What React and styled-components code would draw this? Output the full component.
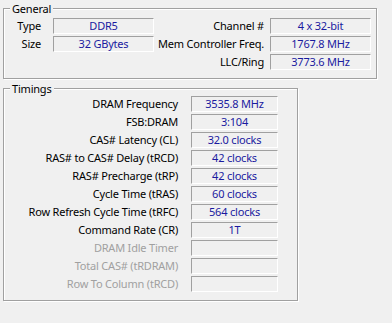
import React from "react";
import styled, { createGlobalStyle } from "styled-components";

const Global = createGlobalStyle`
  html, body {
    margin: 0;
    padding: 0;
    background: #f0f0f0;
  }
  body {
    font-family: "Noto Sans", "DejaVu Sans", sans-serif;
    font-size: 11px;
    letter-spacing: -0.2px;
    color: #000;
  }
`;

const Page = styled.div`
  width: 392px;
  height: 323px;
  padding: 8px 0 0 3px;
  box-sizing: border-box;
  display: flex;
  flex-direction: column;
  align-items: flex-start;
  gap: 9px;
`;

const Group = styled.div`
  position: relative;
  box-sizing: border-box;
  width: ${(p) => p.$width}px;
  border: 1px solid #a0a0a0;
  box-shadow: inset 1px 1px 0 #fff, 1px 1px 0 #fff;
  padding: ${(p) => p.$pad};
  display: grid;
  grid-template-columns: ${(p) => p.$cols};
  grid-auto-rows: 16px;
  row-gap: 2px;
`;

const Legend = styled.span`
  position: absolute;
  left: 6px;
  top: -8px;
  padding: 0 2px;
  line-height: 15px;
  background: #f0f0f0;
`;

const Label = styled.div`
  text-align: right;
  white-space: nowrap;
  line-height: 16px;
  padding-right: ${(p) => p.$gap}px;
  color: ${(p) => (p.$disabled ? "#a0a0a0" : "#000")};
  grid-column: ${(p) => p.$col || "auto"};
`;

const Field = styled.div`
  box-sizing: border-box;
  height: 16px;
  border-top: 1px solid #a0a0a0;
  border-left: 1px solid #a0a0a0;
  border-bottom: 1px solid #fff;
  border-right: 1px solid #fff;
  color: #1a1aa0;
  text-align: center;
  line-height: 14px;
  white-space: nowrap;
  grid-column: ${(p) => p.$col || "auto"};
`;

const timings = [
  ["DRAM Frequency", "3535.8 MHz"],
  ["FSB:DRAM", "3:104"],
  ["CAS# Latency (CL)", "32.0 clocks"],
  ["RAS# to CAS# Delay (tRCD)", "42 clocks"],
  ["RAS# Precharge (tRP)", "42 clocks"],
  ["Cycle Time (tRAS)", "60 clocks"],
  ["Row Refresh Cycle Time (tRFC)", "564 clocks"],
  ["Command Rate (CR)", "1T"],
  ["DRAM Idle Timer", null],
  ["Total CAS# (tRDRAM)", null],
  ["Row To Column (tRCD)", null],
];

export default function App() {
  return (
    <>
      <Global />
      <Page>
        <Group $width={374} $pad="9px 5px 8px 0" $cols="49px 101px 1fr 101px">
          <Legend>General</Legend>
          <Label $gap={12}>Type</Label>
          <Field>DDR5</Field>
          <Label $gap={6}>Channel #</Label>
          <Field>4 x 32-bit</Field>

          <Label $gap={12}>Size</Label>
          <Field>32 GBytes</Field>
          <Label $gap={6}>Mem Controller Freq.</Label>
          <Field>1767.8 MHz</Field>

          <Label $gap={6} $col="3">LLC/Ring</Label>
          <Field>3773.6 MHz</Field>
        </Group>

        <Group $width={295} $pad="7px 19px 8px 0" $cols="187px 87px">
          <Legend>Timings</Legend>
          {timings.map(([name, value]) => (
            <React.Fragment key={name}>
              <Label $gap={13} $disabled={value === null}>{name}</Label>
              <Field>{value}</Field>
            </React.Fragment>
          ))}
        </Group>
      </Page>
    </>
  );
}
